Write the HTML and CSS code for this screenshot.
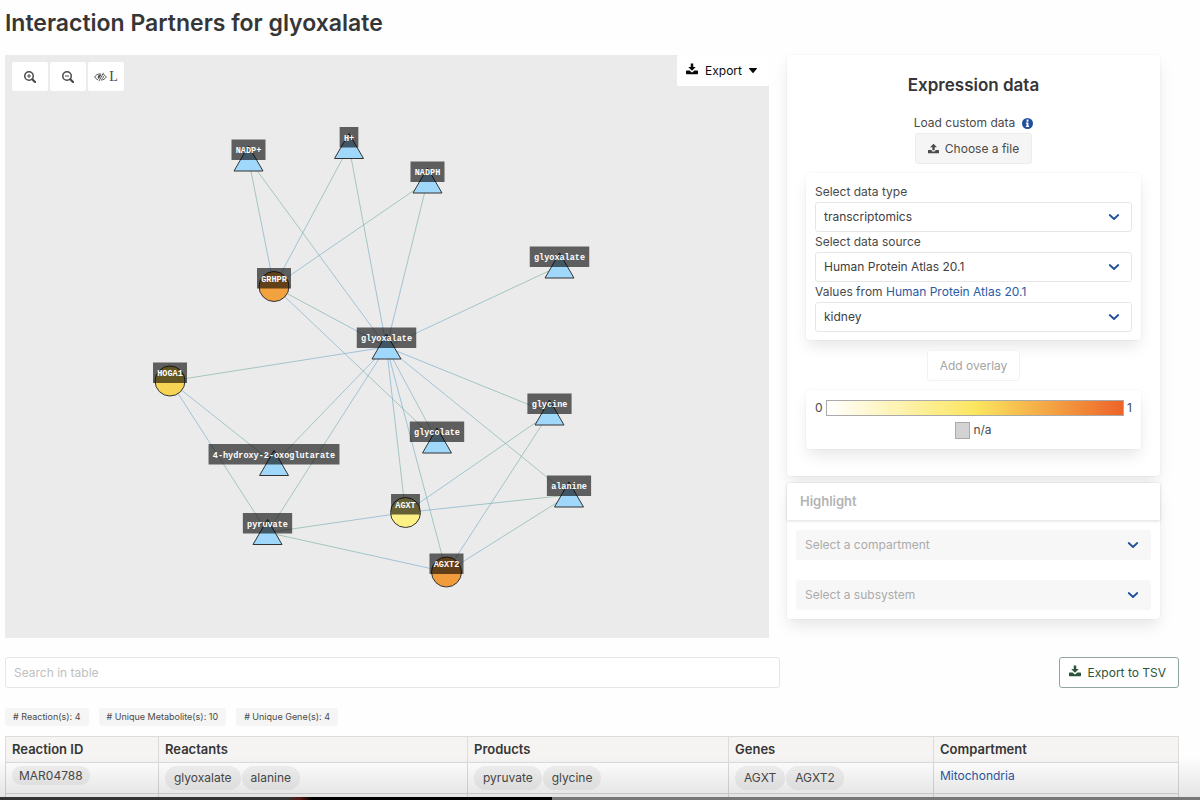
FILE: index.html
```html
<!DOCTYPE html>
<html lang="en">
<head>
<meta charset="utf-8">
<title>Interaction Partners for glyoxalate</title>
<link rel="stylesheet" href="styles.css">
</head>
<body>
<svg class="sprite" aria-hidden="true">
  <symbol id="i-download" viewBox="0 0 24 24">
    <path d="M9.500 1h5v7h5L12 15.500 4.500 8h5z"/>
    <path d="M1.500 15h5.800l3.200 3.200a2.100 2.100 0 0 0 3 0l3.200-3.200h5.800a1.500 1.500 0 0 1 1.500 1.500v4.500a1.500 1.500 0 0 1-1.500 1.500h-21A1.500 1.500 0 0 1 0 21v-4.500A1.500 1.500 0 0 1 1.500 15z"/>
  </symbol>
  <symbol id="i-upload" viewBox="0 0 24 24">
    <path d="M9.500 16h5V9h5L12 1.500 4.500 9h5z"/>
    <path d="M1.500 15.500H8V17a1.500 1.500 0 0 0 1.500 1.500h5A1.500 1.500 0 0 0 16 17v-1.500h6.500A1.500 1.500 0 0 1 24 17v4a1.500 1.500 0 0 1-1.500 1.500h-21A1.500 1.500 0 0 1 0 21v-4a1.500 1.500 0 0 1 1.500-1.500z"/>
  </symbol>
  <symbol id="i-chevron" viewBox="0 0 24 24">
    <path d="M3.500 8l8.500 8 8.500-8" fill="none" stroke="currentColor" stroke-width="3.600" stroke-linecap="round" stroke-linejoin="round"/>
  </symbol>
</svg>

<main class="page">
  <h1 class="title">Interaction Partners for glyoxalate</h1>

  <div class="columns">
    <section class="graph" aria-label="Interaction graph">
      <svg id="graph" class="graph-canvas" viewBox="0 0 1528 1166"></svg>
      <div class="graph-tools">
        <button class="tool" aria-label="Zoom in">
          <svg class="icon-tool" viewBox="0 0 24 24"><g fill="none" stroke="currentColor" stroke-width="3"><circle cx="10" cy="10" r="8.500"/><path d="M16.500 16.500l5.500 5.500" stroke-width="4.500" stroke-linecap="round"/><path d="M10 6v8M6 10h8" stroke-width="2"/></g></svg>
        </button>
        <button class="tool" aria-label="Zoom out">
          <svg class="icon-tool" viewBox="0 0 24 24"><g fill="none" stroke="currentColor" stroke-width="3"><circle cx="10" cy="10" r="8.500"/><path d="M16.500 16.500l5.500 5.500" stroke-width="4.500" stroke-linecap="round"/><path d="M6 10h8" stroke-width="2"/></g></svg>
        </button>
        <button class="tool" aria-label="Toggle labels">
          <svg class="icon-eye" viewBox="0 0 28 20"><path d="M15 3.500C8 2.500 3.500 6 1.500 10c1.500 3 4 5 7 6M20 4.500c3 1.300 5 3.300 6.500 5.500-2.500 4-6.500 6.500-11.500 6.500" fill="none" stroke="currentColor" stroke-width="2"/><path d="M16 4.500c-5-.8-8 2-8 5.500 0 2 .8 3.500 2.500 4.500z"/><path d="M20.500 1L10.500 19" fill="none" stroke="currentColor" stroke-width="2"/><path d="M20 8c.8 3-.8 5-3.500 6" fill="none" stroke="currentColor" stroke-width="2"/></svg>
          <span class="tool-letter">L</span>
        </button>
      </div>
      <button class="export-menu">
        <svg class="icon"><use href="#i-download"/></svg>
        <span>Export</span>
        <svg class="caret" viewBox="0 0 8 5"><path d="M.4 0h7.200a.4.4 0 0 1 .3.700L4.500 4.700a.7.700 0 0 1-1 0L.1.700A.4.400 0 0 1 .4 0z"/></svg>
      </button>
    </section>

    <aside class="sidebar">
      <section class="box expression">
        <h2 class="subtitle">Expression data</h2>
        <div class="load">
          <span>Load custom data</span>
          <svg class="info" viewBox="0 0 24 24"><circle cx="12" cy="12" r="12"/><path d="M10 3.500h4V8h-4zM8.500 10H14v7h1.500v2.500h-7V17H10v-4.500H8.500z" fill="#fff"/></svg>
        </div>
        <button class="btn btn-file"><svg class="icon-sm"><use href="#i-upload"/></svg><span>Choose a file</span></button>
        <div class="box panel fields">
          <label for="type">Select data type</label>
          <div class="select"><select id="type"><option>transcriptomics</option></select><svg class="chevron"><use href="#i-chevron"/></svg></div>
          <label for="source">Select data source</label>
          <div class="select"><select id="source"><option>Human Protein Atlas 20.1</option></select><svg class="chevron"><use href="#i-chevron"/></svg></div>
          <div class="values"><label for="tissue">Values from</label> <a href="#">Human Protein Atlas 20.1</a></div>
          <div class="select"><select id="tissue"><option>kidney</option></select><svg class="chevron"><use href="#i-chevron"/></svg></div>
        </div>
        <button class="btn btn-overlay" disabled>Add overlay</button>
        <div class="box panel legend">
          <div class="scale"><span>0</span><span class="ramp"></span><span>1</span></div>
          <div class="missing"><span class="swatch"></span><span>n/a</span></div>
        </div>
      </section>

      <section class="box highlight">
        <h3 class="card-head">Highlight</h3>
        <div class="card-body">
          <div class="select"><select aria-label="Compartment" disabled><option>Select a compartment</option></select><svg class="chevron"><use href="#i-chevron"/></svg></div>
          <div class="select"><select aria-label="Subsystem" disabled><option>Select a subsystem</option></select><svg class="chevron"><use href="#i-chevron"/></svg></div>
        </div>
      </section>
    </aside>
  </div>

  <div class="table-bar">
    <input class="search" type="text" placeholder="Search in table" aria-label="Search in table">
    <button class="btn btn-tsv"><svg class="icon"><use href="#i-download"/></svg><span>Export to TSV</span></button>
  </div>

  <div class="counts">
    <span class="count"># Reaction(s): 4</span>
    <span class="count"># Unique Metabolite(s): 10</span>
    <span class="count"># Unique Gene(s): 4</span>
  </div>

  <table class="reactions">
    <colgroup><col class="c-id"><col class="c-reactants"><col class="c-products"><col class="c-genes"><col></colgroup>
    <thead>
      <tr><th>Reaction ID</th><th>Reactants</th><th>Products</th><th>Genes</th><th>Compartment</th></tr>
    </thead>
    <tbody>
      <tr>
        <td><span class="pill pill-id">MAR04788</span></td>
        <td><div class="pills"><span class="pill">glyoxalate</span><span class="pill">alanine</span></div></td>
        <td><div class="pills"><span class="pill">pyruvate</span><span class="pill">glycine</span></div></td>
        <td><div class="pills"><span class="pill">AGXT</span><span class="pill">AGXT2</span></div></td>
        <td><a href="#">Mitochondria</a></td>
      </tr>
      <tr class="next"><td></td><td></td><td></td><td></td><td></td></tr>
    </tbody>
  </table>
</main>
<div class="player"></div>
<script src="graph.js"></script>
</body>
</html>
```
FILE: styles.css
```css
* { box-sizing: border-box; }

body {
  margin: 0;
  background: #fefefe;
  color: #4a4a4a;
  font: 12px/20px Inter, "Liberation Sans", sans-serif;
}

a { color: #2c5aa5; text-decoration: none; }
button, select, input { font: inherit; color: inherit; margin: 0; }
svg { fill: currentColor; }

.sprite { position: absolute; width: 0; height: 0; }

.page { padding: 8px 21px 0 5px; }

.title {
  margin: 0 0 17px;
  color: #363636;
  font-size: 23px;
  font-weight: 600;
  line-height: 30px;
}

.columns {
  display: grid;
  grid-template-columns: 764fr 373fr;
  gap: 18px;
  align-items: start;
  margin-right: 19px;
}

/* Graph */
.graph { position: relative; background: #ebebeb; }
.graph-canvas { display: block; width: 100%; height: auto; }
.edge { stroke-width: 2; stroke-opacity: .6; }
.metabolite { fill: #a0d8fb; stroke: #333; stroke-width: 2; }
.gene { stroke: #333; stroke-width: 2; }
.label-box { fill: #000; fill-opacity: .6; }
.label-text {
  fill: #fff;
  font: bold 17px "Courier New", "Liberation Mono", monospace;
  text-anchor: middle;
}

.graph-tools { position: absolute; top: 7px; left: 7px; display: flex; gap: 2px; }
.tool {
  display: flex;
  align-items: center;
  justify-content: center;
  gap: 2px;
  width: 36px;
  height: 29px;
  padding: 0;
  border: 0;
  border-radius: 2px;
  background: #fff;
}
.icon-tool { width: 12px; height: 12px; }
.icon-eye { width: 13px; height: 10px; }
.tool-letter { font: 14px/16px "Liberation Serif", serif; }

.export-menu {
  position: absolute;
  top: 0;
  right: 0;
  display: flex;
  align-items: center;
  gap: 7px;
  height: 31px;
  padding: 0 12px 0 9px;
  border: 0;
  border-radius: 2px;
  background: #fff;
  color: #0a0a0a;
}
.icon { width: 12px; height: 12px; margin-bottom: 3px; }
.icon-sm { width: 11px; height: 11px; }
.caret { width: 8px; height: 5px; }

/* Sidebar */
.sidebar { display: grid; gap: 7px; }
.box {
  border-radius: 4px;
  background: #fff;
  box-shadow: 0 8px 16px -2px rgba(10, 10, 10, .1), 0 0 0 1px rgba(10, 10, 10, .02);
}
.expression {
  display: flex;
  flex-direction: column;
  align-items: center;
  padding: 18px 19px 27px;
}
.subtitle {
  margin: 0 0 16px;
  color: #363636;
  font-size: 17px;
  font-weight: 600;
  line-height: 24px;
}
.load { display: flex; align-items: center; gap: 7px; }
.info { width: 11px; height: 11px; color: #22509c; }

.btn {
  display: flex;
  align-items: center;
  gap: 7px;
  height: 31px;
  border: 1px solid #dbdbdb;
  border-radius: 3px;
  background: #fff;
}
.btn-file { gap: 6px; padding: 0 12px; border-color: #ececec; background: #f5f5f5; }
.btn-overlay { margin: 10px 0 9px; padding: 0 12px; border-color: #f2f2f2; color: #a5a5a5; }
.btn-tsv { padding: 0 12px 0 9px; border-color: #8fa79a; color: #2b5439; }

.panel { width: 100%; padding: 9px; }
.fields { display: grid; margin-top: 9px; padding-bottom: 8px; }

.select { position: relative; display: grid; align-items: center; }
.select select {
  width: 100%;
  height: 30px;
  padding: 0 32px 0 8px;
  border: 1px solid #e6e6e6;
  border-radius: 3px;
  background: #fff;
  color: #404040;
  appearance: none;
}
.select select:disabled { border-color: #f7f7f7; background: #f7f7f7; color: #ababab; opacity: 1; }
.chevron {
  position: absolute;
  right: 12px;
  width: 12px;
  height: 12px;
  color: #22509c;
  pointer-events: none;
}

.scale { display: flex; align-items: center; gap: 3px; line-height: 18px; }
.ramp {
  flex: 1;
  height: 16px;
  border: 1px solid #aaa;
  background: linear-gradient(90deg, #fff, #fbe65f 50%, #ee6329);
}
.missing { display: flex; align-items: center; justify-content: center; gap: 3px; margin-top: 3px; line-height: 20px; }
.swatch { width: 15px; height: 17px; border: 1px solid #aaa; background: #d3d3d3; }

.card-head {
  margin: 0;
  padding: 9px 13px;
  box-shadow: 0 1px 3px rgba(10, 10, 10, .14);
  color: #b3b3b3;
  font-size: 13px;
  font-weight: 600;
  line-height: 19px;
}
.card-body { display: grid; gap: 20px; padding: 10px 9px 9px; }

/* Table */
.table-bar { display: flex; justify-content: space-between; margin-top: 19px; }
.search {
  width: 66%;
  height: 31px;
  padding: 0 8px;
  border: 1px solid #e6e6e6;
  border-radius: 3px;
  background: #fff;
}
.search::placeholder { color: #c0c0c0; }

.counts { display: flex; gap: 10px; margin: 20px 0 10px; }
.count {
  padding: 0 8px;
  border-radius: 3px;
  background: #f5f5f5;
  font-size: 9px;
  line-height: 18px;
}

.reactions { width: 100%; table-layout: fixed; border-collapse: collapse; }
.c-id { width: 153px; }
.c-reactants { width: 309px; }
.c-products { width: 261px; }
.c-genes { width: 205px; }
.reactions th, .reactions td {
  padding: 3px 6px;
  border: 1px solid #dcdcdc;
  text-align: left;
  vertical-align: top;
}
.reactions th {
  background: #f5f4f2;
  color: #363636;
  font-size: 13px;
  font-weight: 600;
  line-height: 19px;
}
.reactions .next td { padding: 2px; border-bottom: 0; }
.pills { display: flex; gap: 1px; }
.pill {
  padding: 0 9px;
  border-radius: 12px;
  background: #f1f1f1;
  line-height: 24px;
}
.pill-id { display: inline-block; padding: 0 7px; line-height: 19px; }

/* Playback strip along the bottom of the window */
.player {
  position: fixed;
  right: 0;
  bottom: 0;
  left: 0;
  height: 43px;
  border-bottom: 3px solid transparent;
  background:
    linear-gradient(90deg, #333 24%, #5a1510 25%, #000 26%, #000 46%, #777 46%) border-box bottom / 100% 3px no-repeat,
    linear-gradient(rgba(0, 0, 0, 0), rgba(0, 0, 0, .1)) padding-box;
  pointer-events: none;
}
```
FILE: graph.js
```js
// Triangles are placed by the middle of their base, circles by their centre.
const nodes = {
  nadpPlus: { label: "NADP+", x: 487, y: 232 },
  h: { label: "H+", x: 688, y: 207 },
  nadph: { label: "NADPH", x: 845, y: 276 },
  glyoxalateOuter: { label: "glyoxalate", x: 1109, y: 446 },
  glyoxalate: { label: "glyoxalate", x: 763, y: 608 },
  glycolate: { label: "glycolate", x: 864, y: 796 },
  hydroxy: { label: "4-hydroxy-2-oxoglutarate", x: 538, y: 841 },
  pyruvate: { label: "pyruvate", x: 525, y: 979 },
  glycine: { label: "glycine", x: 1089, y: 740 },
  alanine: { label: "alanine", x: 1128, y: 904 },
  grhpr: { label: "GRHPR", x: 538, y: 463, color: "#f2a340" },
  hoga1: { label: "HOGA1", x: 330, y: 652, color: "#f8d454" },
  agxt: { label: "AGXT", x: 801, y: 915, color: "#fdf084" },
  agxt2: { label: "AGXT2", x: 883, y: 1034, color: "#f09c3c" }
};

// Each edge fades from green at its first node to blue at its second.
const edges = [
  ["nadpPlus", "grhpr"], ["nadpPlus", "glyoxalate"],
  ["h", "grhpr"], ["h", "glyoxalate"],
  ["nadph", "grhpr"], ["nadph", "glyoxalate"],
  ["glyoxalateOuter", "glyoxalate"],
  ["grhpr", "glyoxalate"], ["glycolate", "grhpr"], ["glycolate", "glyoxalate"],
  ["hoga1", "glyoxalate"], ["hydroxy", "hoga1"], ["pyruvate", "hoga1"],
  ["hydroxy", "glyoxalate"], ["pyruvate", "glyoxalate"],
  ["agxt", "glyoxalate"], ["agxt2", "glyoxalate"],
  ["glycine", "glyoxalate"], ["alanine", "glyoxalate"],
  ["glycine", "agxt"], ["alanine", "agxt"], ["pyruvate", "agxt"],
  ["glycine", "agxt2"], ["alanine", "agxt2"], ["pyruvate", "agxt2"]
];

const svg = document.getElementById("graph");

function add(parent, name, attrs) {
  const el = document.createElementNS("http://www.w3.org/2000/svg", name);
  for (const key in attrs) el.setAttribute(key, attrs[key]);
  parent.appendChild(el);
  return el;
}

const middle = (n) => (n.color ? n.y : n.y - 24);

const defs = add(svg, "defs", {});
edges.forEach(([from, to], i) => {
  const a = nodes[from];
  const b = nodes[to];
  const line = { x1: a.x, y1: middle(a), x2: b.x, y2: middle(b) };
  const gradient = add(defs, "linearGradient", { id: "edge" + i, gradientUnits: "userSpaceOnUse", ...line });
  add(gradient, "stop", { offset: 0, "stop-color": "#78b088" });
  add(gradient, "stop", { offset: 1, "stop-color": "#6aa5dc" });
  add(svg, "line", { class: "edge", stroke: `url(#edge${i})`, ...line });
});

for (const n of Object.values(nodes)) {
  if (n.color) {
    add(svg, "circle", { class: "gene", cx: n.x, cy: n.y, r: 30, fill: n.color });
  } else {
    add(svg, "path", { class: "metabolite", d: `M${n.x} ${n.y - 50}L${n.x + 29} ${n.y}H${n.x - 29}Z` });
  }
}

for (const n of Object.values(nodes)) {
  const top = n.color ? n.y - 37 : n.y - 63;
  const width = n.label.length * 10.2 + 17;
  add(svg, "rect", { class: "label-box", x: n.x - width / 2, y: top, width, height: 41 });
  add(svg, "text", { class: "label-text", x: n.x, y: top + 27 }).textContent = n.label;
}
```
